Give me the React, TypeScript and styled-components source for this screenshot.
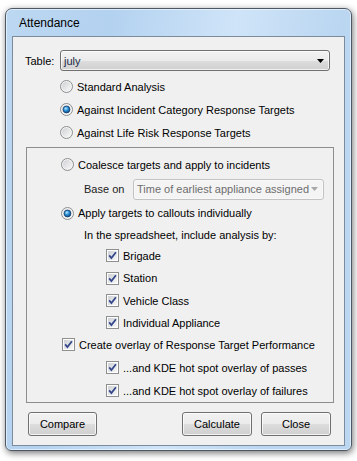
import styled, { createGlobalStyle } from 'styled-components';

const GlobalStyle = createGlobalStyle`
  html, body {
    margin: 0;
    padding: 0;
    background: #ffffff;
  }
  body {
    font-family: 'Liberation Sans', Arial, sans-serif;
    font-size: 11px;
    color: #000000;
  }
`;

const Page = styled.div`
  width: 357px;
  height: 461px;
  box-sizing: border-box;
  padding: 8px 5px 0 5px;
`;

const Window = styled.div`
  width: 347px;
  height: 443px;
  box-sizing: border-box;
  display: flex;
  flex-direction: column;
  padding: 0 6px 4px 6px;
  border: 1px solid #4d5866;
  border-radius: 7px 7px 6px 6px;
  background: linear-gradient(
    100deg,
    #bcd7f1 0%,
    #b3d2f0 25%,
    #cfe4f8 55%,
    #bad6f1 80%,
    #bbd6f0 100%
  );
  box-shadow:
    inset 0 0 0 1px rgba(255, 255, 255, 0.55),
    1px 2px 7px rgba(0, 0, 0, 0.55);
`;

const TitleBar = styled.div`
  height: 27px;
  display: flex;
  align-items: center;
  padding-left: 7px;
  padding-top: 1px;
  box-sizing: border-box;
  font-size: 12px;
  color: #000000;
`;

const Client = styled.div`
  width: 333px;
  height: 410px;
  box-sizing: border-box;
  border: 1px solid #7d8c9d;
  background: #f0f0f0;
  padding-top: 13px;
  display: flex;
  flex-direction: column;
`;

const TableRow = styled.div`
  height: 21px;
  display: flex;
  align-items: center;
  padding-left: 12px;
`;

const Label = styled.span<{ $width?: number; $muted?: boolean }>`
  width: ${(p) => (p.$width ? `${p.$width}px` : 'auto')};
  flex-shrink: 0;
  white-space: nowrap;
  color: ${(p) => (p.$muted ? '#222222' : '#000000')};
`;

const Combo = styled.div<{ $width: number; $disabled?: boolean }>`
  width: ${(p) => p.$width}px;
  height: 21px;
  box-sizing: border-box;
  flex-shrink: 0;
  display: flex;
  align-items: center;
  justify-content: space-between;
  padding: 0 5px 0 3px;
  border: 1px solid ${(p) => (p.$disabled ? '#c3c3c3' : '#707070')};
  border-radius: 3px;
  background: ${(p) =>
    p.$disabled
      ? '#f4f4f4'
      : 'linear-gradient(#f3f3f3 0%, #ebebeb 50%, #dddddd 51%, #d0d0d0 100%)'};
  box-shadow: inset 0 0 0 1px
    ${(p) => (p.$disabled ? 'rgba(255,255,255,0.4)' : 'rgba(255,255,255,0.7)')};
  color: ${(p) => (p.$disabled ? '#6d6d6d' : '#1b2a44')};
  white-space: nowrap;
  overflow: hidden;
`;

const RadioList = styled.div`
  margin-top: 4px;
  padding-left: 47px;
  display: flex;
  flex-direction: column;
`;

const OptionRow = styled.div<{ $h?: number; $indent?: number }>`
  height: ${(p) => p.$h ?? 23}px;
  display: flex;
  align-items: center;
  gap: 4px;
  padding-left: ${(p) => p.$indent ?? 0}px;
  white-space: nowrap;
`;

const GroupBox = styled.div`
  margin: 3px 0 0 13px;
  width: 308px;
  height: 256px;
  box-sizing: border-box;
  border: 1px solid #8d8d8d;
  padding: 5px 0 0 34px;
  display: flex;
  flex-direction: column;
`;

const ButtonBar = styled.div`
  margin-top: 9px;
  padding: 0 13px 0 15px;
  display: flex;
  align-items: center;
  gap: 9px;
`;

const Spacer = styled.div`
  flex: 1;
`;

const Button = styled.button<{ $width: number }>`
  width: ${(p) => p.$width}px;
  height: 24px;
  box-sizing: border-box;
  padding: 0;
  border: 1px solid #707070;
  border-radius: 3px;
  background: linear-gradient(#f2f2f2 0%, #ebebeb 50%, #dddddd 51%, #cfcfcf 100%);
  box-shadow: inset 0 0 0 1px rgba(255, 255, 255, 0.75);
  font-family: inherit;
  font-size: 11px;
  color: #000000;
`;

const Radio = ({ checked }: { checked?: boolean }) => (
  <svg width="13" height="13" viewBox="0 0 13 13" style={{ flexShrink: 0 }}>
    <defs>
      <linearGradient id="radioFill" x1="0" y1="0" x2="1" y2="1">
        <stop offset="0" stopColor="#cfd1d4" />
        <stop offset="1" stopColor="#f9f9f9" />
      </linearGradient>
      <radialGradient id="radioDot" cx="0.4" cy="0.35" r="0.7">
        <stop offset="0" stopColor="#b8eaff" />
        <stop offset="0.45" stopColor="#2d94dc" />
        <stop offset="1" stopColor="#0b3f76" />
      </radialGradient>
    </defs>
    <circle cx="6.5" cy="6.5" r="6" fill="#f4f4f4" stroke="#8b8d8f" />
    <circle cx="6.5" cy="6.5" r="4.6" fill="url(#radioFill)" />
    {checked && (
      <circle
        cx="6.5"
        cy="6.5"
        r="3.4"
        fill="url(#radioDot)"
        stroke="#143d6b"
        strokeWidth="0.8"
      />
    )}
  </svg>
);

const Check = () => (
  <svg width="13" height="13" viewBox="0 0 13 13" style={{ flexShrink: 0 }}>
    <defs>
      <linearGradient id="checkFill" x1="0" y1="0" x2="1" y2="1">
        <stop offset="0" stopColor="#cdd0d5" />
        <stop offset="1" stopColor="#f7f7f7" />
      </linearGradient>
    </defs>
    <rect x="0.5" y="0.5" width="12" height="12" fill="#ffffff" stroke="#8e8f8f" />
    <rect x="2" y="2" width="9" height="9" fill="url(#checkFill)" />
    <path
      d="M3.2 6.4 L5.4 9.1 L9.9 3.2"
      stroke="#33468a"
      strokeWidth="1.7"
      fill="none"
    />
  </svg>
);

const Arrow = ({ color }: { color: string }) => (
  <svg width="7" height="4" viewBox="0 0 7 4" style={{ flexShrink: 0 }}>
    <path d="M0 0 H7 L3.5 4 Z" fill={color} />
  </svg>
);

const checks = ['Brigade', 'Station', 'Vehicle Class', 'Individual Appliance'];

export default function App() {
  return (
    <Page>
      <GlobalStyle />
      <Window>
        <TitleBar>Attendance</TitleBar>
        <Client>
          <TableRow>
            <Label $width={35}>Table:</Label>
            <Combo $width={270}>
              <span>july</span>
              <Arrow color="#000000" />
            </Combo>
          </TableRow>

          <RadioList>
            <OptionRow>
              <Radio />
              <span>Standard Analysis</span>
            </OptionRow>
            <OptionRow>
              <Radio checked />
              <span>Against Incident Category Response Targets</span>
            </OptionRow>
            <OptionRow>
              <Radio />
              <span>Against Life Risk Response Targets</span>
            </OptionRow>
          </RadioList>

          <GroupBox>
            <OptionRow $h={24}>
              <Radio />
              <span>Coalesce targets and apply to incidents</span>
            </OptionRow>
            <OptionRow $h={25} $indent={23}>
              <Label $width={45} $muted>
                Base on
              </Label>
              <Combo $width={191} $disabled>
                <span>Time of earliest appliance assigned</span>
                <Arrow color="#a8a8a8" />
              </Combo>
            </OptionRow>
            <OptionRow>
              <Radio checked />
              <span>Apply targets to callouts individually</span>
            </OptionRow>
            <OptionRow $h={20} $indent={23}>
              <span>In the spreadsheet, include analysis by:</span>
            </OptionRow>
            {checks.map((c, i) => (
              <OptionRow key={c} $h={i === 0 ? 22 : i === 3 ? 21 : 23} $indent={45}>
                <Check />
                <span>{c}</span>
              </OptionRow>
            ))}
            <OptionRow $indent={1}>
              <Check />
              <span>Create overlay of Response Target Performance</span>
            </OptionRow>
            <OptionRow $indent={45}>
              <Check />
              <span>...and KDE hot spot overlay of passes</span>
            </OptionRow>
            <OptionRow $indent={45}>
              <Check />
              <span>...and KDE hot spot overlay of failures</span>
            </OptionRow>
          </GroupBox>

          <ButtonBar>
            <Button $width={69}>Compare</Button>
            <Spacer />
            <Button $width={70}>Calculate</Button>
            <Button $width={70}>Close</Button>
          </ButtonBar>
        </Client>
      </Window>
    </Page>
  );
}
